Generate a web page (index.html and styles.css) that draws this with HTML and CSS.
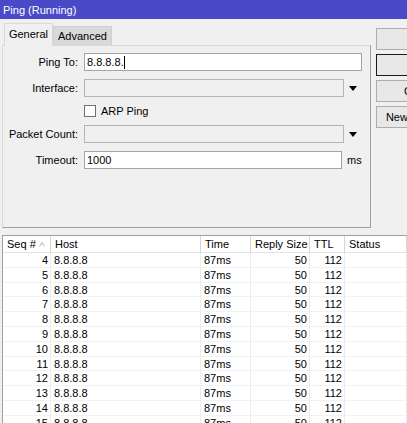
FILE: index.html
```html
<!DOCTYPE html>
<html>
<head>
<meta charset="utf-8">
<link rel="stylesheet" href="styles.css">
</head>
<body>
<div class="title">Ping (Running)</div>
<div class="top">
  <div class="left">
    <div class="tabs">
      <div class="tab active">General</div>
      <div class="tab">Advanced</div>
    </div>
    <div class="panel">
      <div class="row">
        <div class="lbl">Ping To:</div>
        <div class="input w-full">8.8.8.8.<span class="caret"></span></div>
      </div>
      <div class="row">
        <div class="lbl">Interface:</div>
        <div class="input w-combo disabled"></div>
        <span class="arrow"></span>
      </div>
      <div class="row check-row">
        <div class="lbl"></div>
        <span class="checkbox"></span>
        <span class="check-label">ARP Ping</span>
      </div>
      <div class="row">
        <div class="lbl">Packet Count:</div>
        <div class="input w-combo disabled"></div>
        <span class="arrow"></span>
      </div>
      <div class="row">
        <div class="lbl">Timeout:</div>
        <div class="input w-timeout">1000</div>
        <span class="unit">ms</span>
      </div>
    </div>
  </div>
  <div class="buttons">
    <div class="btn disabled-btn">Start</div>
    <div class="btn default">Stop</div>
    <div class="btn">Close</div>
    <div class="btn">New Window</div>
  </div>
</div>
<div class="list">
  <div class="lrow lhead">
    <div class="c">Seq #<svg class="sort" width="6" height="5" viewBox="0 0 6 5"><path d="M0.5 4.5 L3 0.5 L5.5 4.5" fill="none" stroke="#b0b0b0" stroke-width="1"/></svg></div>
    <div class="c">Host</div>
    <div class="c">Time</div>
    <div class="c">Reply Size</div>
    <div class="c">TTL</div>
    <div class="c">Status</div>
  </div>
  <div class="lrow"><div class="c r">4</div><div class="c">8.8.8.8</div><div class="c">87ms</div><div class="c r">50</div><div class="c r">112</div><div class="c"></div></div>
  <div class="lrow"><div class="c r">5</div><div class="c">8.8.8.8</div><div class="c">87ms</div><div class="c r">50</div><div class="c r">112</div><div class="c"></div></div>
  <div class="lrow"><div class="c r">6</div><div class="c">8.8.8.8</div><div class="c">87ms</div><div class="c r">50</div><div class="c r">112</div><div class="c"></div></div>
  <div class="lrow"><div class="c r">7</div><div class="c">8.8.8.8</div><div class="c">87ms</div><div class="c r">50</div><div class="c r">112</div><div class="c"></div></div>
  <div class="lrow"><div class="c r">8</div><div class="c">8.8.8.8</div><div class="c">87ms</div><div class="c r">50</div><div class="c r">112</div><div class="c"></div></div>
  <div class="lrow"><div class="c r">9</div><div class="c">8.8.8.8</div><div class="c">87ms</div><div class="c r">50</div><div class="c r">112</div><div class="c"></div></div>
  <div class="lrow"><div class="c r">10</div><div class="c">8.8.8.8</div><div class="c">87ms</div><div class="c r">50</div><div class="c r">112</div><div class="c"></div></div>
  <div class="lrow"><div class="c r">11</div><div class="c">8.8.8.8</div><div class="c">87ms</div><div class="c r">50</div><div class="c r">112</div><div class="c"></div></div>
  <div class="lrow"><div class="c r">12</div><div class="c">8.8.8.8</div><div class="c">87ms</div><div class="c r">50</div><div class="c r">112</div><div class="c"></div></div>
  <div class="lrow"><div class="c r">13</div><div class="c">8.8.8.8</div><div class="c">87ms</div><div class="c r">50</div><div class="c r">112</div><div class="c"></div></div>
  <div class="lrow"><div class="c r">14</div><div class="c">8.8.8.8</div><div class="c">87ms</div><div class="c r">50</div><div class="c r">112</div><div class="c"></div></div>
  <div class="lrow"><div class="c r">15</div><div class="c">8.8.8.8</div><div class="c">87ms</div><div class="c r">50</div><div class="c r">112</div><div class="c"></div></div>
</div>
</body>
</html>
```
FILE: styles.css
```css
* { box-sizing: border-box; }
html, body {
  margin: 0;
  padding: 0;
  background: #f0f0f0;
  font-family: "Liberation Sans", Arial, sans-serif;
  font-size: 11px;
  color: #000;
  overflow: hidden;
  width: 407px;
  height: 423px;
}
.title {
  height: 19px;
  background: #4a4ac8;
  color: #fff;
  padding: 2px 0 0 3px;
  line-height: 17px;
  font-size: 11px;
  white-space: nowrap;
}
.top {
  display: flex;
  height: 209px;
}
.left {
  width: 371px;
  flex: none;
  padding: 4px 0 0 2px;
  display: flex;
  flex-direction: column;
}
.tabs {
  display: flex;
  align-items: flex-end;
  height: 22px;
  margin-left: 2px;
}
.tab {
  height: 19px;
  width: 59px;
  background: #d9d9d9;
  border: 1px solid #d0d0d0;
  border-bottom: none;
  text-align: center;
  line-height: 18px;
}
.tab.active {
  height: 23px;
  width: 49px;
  background: #f0f0f0;
  border-color: #d9d9d9;
  margin-bottom: -1px;
  position: relative;
  line-height: 20px;
}
.panel {
  height: 183px;
  border: 1px solid #d9d9d9;
  border-right-color: #a0a0a0;
  border-bottom-color: #a0a0a0;
  padding-top: 7px;
}
.row {
  display: flex;
  align-items: center;
  height: 18px;
  margin-bottom: 8px;
}
.check-row { height: 12px; }
.lbl {
  width: 75px;
  text-align: right;
  margin-right: 6px;
  white-space: nowrap;
}
.input {
  height: 18px;
  border: 1px solid #a5a5a5;
  background: #fff;
  padding-left: 2px;
  line-height: 16px;
  white-space: nowrap;
}
.input.disabled { background: #f0f0f0; border-color: #b4b4b4; }
.w-full { width: 278px; }
.w-combo { width: 260px; }
.w-timeout { width: 258px; }
.caret {
  display: inline-block;
  width: 1px;
  height: 13px;
  background: #000;
  vertical-align: -3px;
}
.arrow {
  width: 0;
  height: 0;
  margin-left: 5px;
  border-left: 4px solid transparent;
  border-right: 4px solid transparent;
  border-top: 5px solid #000;
}
.checkbox {
  width: 12px;
  height: 12px;
  border: 1px solid #707070;
  background: #fff;
}
.check-label { margin-left: 5px; }
.unit { margin-left: 5px; }
.buttons {
  margin-left: 5px;
  padding-top: 9px;
  display: flex;
  flex-direction: column;
  gap: 4px;
}
.btn {
  width: 84px;
  height: 22px;
  flex: none;
  border: 1px solid #adadad;
  background: #e8e8e8;
  text-align: center;
  line-height: 20px;
  white-space: nowrap;
}
.btn.default { border-color: #1a1a1a; }
.btn.disabled-btn { color: #a0a0a0; }
.list {
  margin: 7px 0 0 2px;
  border-top: 1px solid #a0a0a0;
  border-left: 1px solid #a0a0a0;
  background: #fff;
  height: 200px;
}
.lrow {
  display: grid;
  grid-template-columns: 48px 150px 50px 59px 35px 1fr;
  height: 14.8px;
  line-height: 14px;
}
.lrow .c {
  border-right: 1px solid #ececec;
  border-bottom: 1px solid #f2f2f2;
  padding: 0 3px;
  white-space: nowrap;
  overflow: hidden;
}
.lrow .c.r { text-align: right; padding-right: 2px; }
.lhead { height: 17px; }
.lhead .c {
  border-right-color: #d5d5d5;
  border-bottom-color: #e3e3e3;
  line-height: 16px;
  padding-left: 4px;
}
.sort { margin-left: 3px; vertical-align: 1px; }
```
